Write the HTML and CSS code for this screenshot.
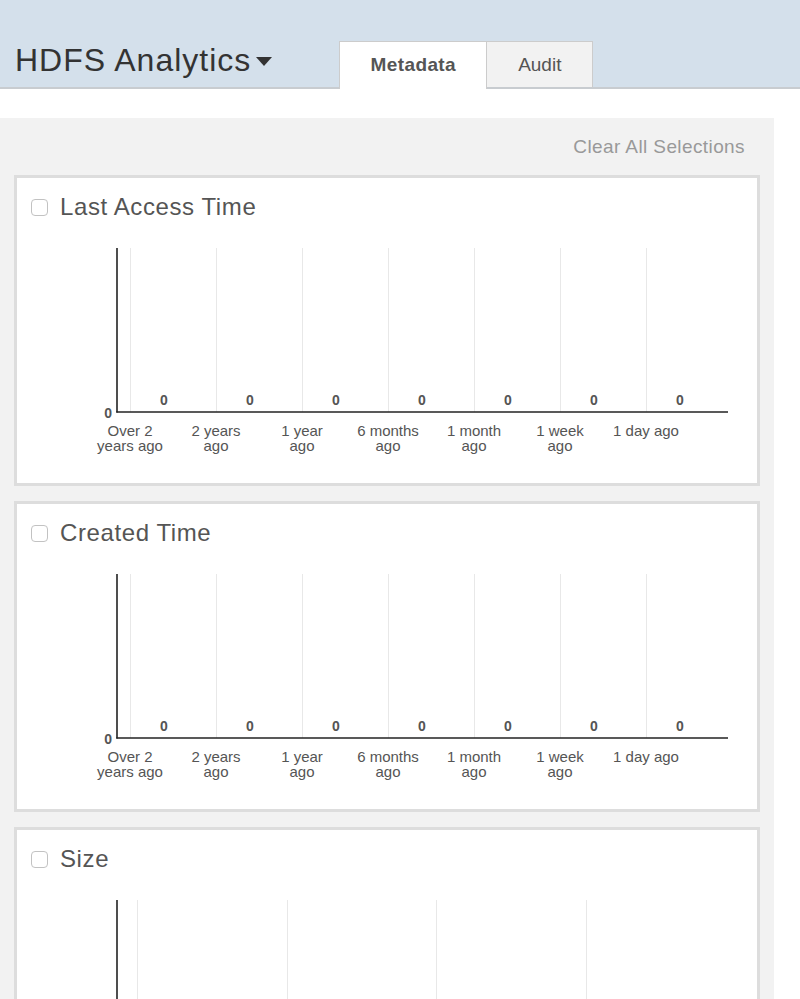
FILE: index.html
```html
<!DOCTYPE html>
<html>
<head>
<meta charset="utf-8">
<title>HDFS Analytics</title>
<link rel="stylesheet" href="styles.css">
</head>
<body>
<header class="topbar">
  <div class="brand">HDFS Analytics<span class="caret"></span></div>
  <nav class="tabs">
    <div class="tab active">Metadata</div>
    <div class="tab">Audit</div>
  </nav>
</header>

<main class="panel">
  <div class="clear-row"><span class="clear-link">Clear All Selections</span></div>

  <section class="card">
    <div class="card-head"><input type="checkbox" class="check"><span class="card-title">Last Access Time</span></div>
    <svg class="chart" width="740" height="261" viewBox="0 0 740 261">
      <g class="grid">
        <line x1="113.5" y1="26" x2="113.5" y2="190"/>
        <line x1="199.5" y1="26" x2="199.5" y2="190"/>
        <line x1="285.5" y1="26" x2="285.5" y2="190"/>
        <line x1="371.5" y1="26" x2="371.5" y2="190"/>
        <line x1="457.5" y1="26" x2="457.5" y2="190"/>
        <line x1="543.5" y1="26" x2="543.5" y2="190"/>
        <line x1="629.5" y1="26" x2="629.5" y2="190"/>
      </g>
      <g class="axis">
        <line x1="100" y1="26" x2="100" y2="190.5"/>
        <line x1="99.3" y1="190" x2="711" y2="190"/>
      </g>
      <text class="ylabel" x="95" y="196">0</text>
      <g class="values">
        <text x="147" y="183">0</text>
        <text x="233" y="183">0</text>
        <text x="319" y="183">0</text>
        <text x="405" y="183">0</text>
        <text x="491" y="183">0</text>
        <text x="577" y="183">0</text>
        <text x="663" y="183">0</text>
      </g>
      <g class="ticks">
        <text x="113" y="213.5">Over 2<tspan x="113" y="229">years ago</tspan></text>
        <text x="199" y="213.5">2 years<tspan x="199" y="229">ago</tspan></text>
        <text x="285" y="213.5">1 year<tspan x="285" y="229">ago</tspan></text>
        <text x="371" y="213.5">6 months<tspan x="371" y="229">ago</tspan></text>
        <text x="457" y="213.5">1 month<tspan x="457" y="229">ago</tspan></text>
        <text x="543" y="213.5">1 week<tspan x="543" y="229">ago</tspan></text>
        <text x="629" y="213.5">1 day ago</text>
      </g>
    </svg>
  </section>

  <section class="card">
    <div class="card-head"><input type="checkbox" class="check"><span class="card-title">Created Time</span></div>
    <svg class="chart" width="740" height="261" viewBox="0 0 740 261">
      <g class="grid">
        <line x1="113.5" y1="26" x2="113.5" y2="190"/>
        <line x1="199.5" y1="26" x2="199.5" y2="190"/>
        <line x1="285.5" y1="26" x2="285.5" y2="190"/>
        <line x1="371.5" y1="26" x2="371.5" y2="190"/>
        <line x1="457.5" y1="26" x2="457.5" y2="190"/>
        <line x1="543.5" y1="26" x2="543.5" y2="190"/>
        <line x1="629.5" y1="26" x2="629.5" y2="190"/>
      </g>
      <g class="axis">
        <line x1="100" y1="26" x2="100" y2="190.5"/>
        <line x1="99.3" y1="190" x2="711" y2="190"/>
      </g>
      <text class="ylabel" x="95" y="196">0</text>
      <g class="values">
        <text x="147" y="183">0</text>
        <text x="233" y="183">0</text>
        <text x="319" y="183">0</text>
        <text x="405" y="183">0</text>
        <text x="491" y="183">0</text>
        <text x="577" y="183">0</text>
        <text x="663" y="183">0</text>
      </g>
      <g class="ticks">
        <text x="113" y="213.5">Over 2<tspan x="113" y="229">years ago</tspan></text>
        <text x="199" y="213.5">2 years<tspan x="199" y="229">ago</tspan></text>
        <text x="285" y="213.5">1 year<tspan x="285" y="229">ago</tspan></text>
        <text x="371" y="213.5">6 months<tspan x="371" y="229">ago</tspan></text>
        <text x="457" y="213.5">1 month<tspan x="457" y="229">ago</tspan></text>
        <text x="543" y="213.5">1 week<tspan x="543" y="229">ago</tspan></text>
        <text x="629" y="213.5">1 day ago</text>
      </g>
    </svg>
  </section>

  <section class="card">
    <div class="card-head"><input type="checkbox" class="check"><span class="card-title">Size</span></div>
    <svg class="chart" width="740" height="261" viewBox="0 0 740 261">
      <g class="grid">
        <line x1="120.5" y1="26" x2="120.5" y2="190"/>
        <line x1="270.5" y1="26" x2="270.5" y2="190"/>
        <line x1="419.5" y1="26" x2="419.5" y2="190"/>
        <line x1="569.5" y1="26" x2="569.5" y2="190"/>
      </g>
      <g class="axis">
        <line x1="100" y1="26" x2="100" y2="190.5"/>
        <line x1="99.3" y1="190" x2="711" y2="190"/>
      </g>
    </svg>
  </section>
</main>
</body>
</html>
```

FILE: styles.css
```css
html, body {
  margin: 0;
  padding: 0;
  background: #ffffff;
  overflow: hidden;
}

body {
  font-family: "Liberation Sans", Arial, Helvetica, sans-serif;
  color: #555555;
}

.topbar {
  display: flex;
  align-items: flex-end;
  height: 87px;
  background: #d4e0eb;
  border-bottom: 2px solid #c8ccd0;
}

.brand {
  display: flex;
  align-items: center;
  margin: 0 0 7px 15px;
  font-size: 32px;
  line-height: 40px;
  letter-spacing: 1px;
  color: #333333;
}

.caret {
  width: 0;
  height: 0;
  margin-left: 5px;
  margin-top: 2px;
  border-left: 8.5px solid transparent;
  border-right: 8.5px solid transparent;
  border-top: 9px solid #333333;
}

.tabs {
  display: flex;
  align-items: flex-end;
  margin-left: 67px;
}

.tab {
  box-sizing: border-box;
  width: 106px;
  height: 46px;
  line-height: 45px;
  text-align: center;
  font-size: 19px;
  color: #555555;
  background: #f2f2f2;
  border: 1px solid #cccccc;
  border-bottom: none;
  border-left: none;
}

.tab.active {
  width: 148px;
  height: 48px;
  margin-bottom: -2px;
  background: #ffffff;
  border-left: 1px solid #cccccc;
  font-weight: bold;
  letter-spacing: 0.4px;
  color: #555555;
}

.panel {
  width: 774px;
  box-sizing: border-box;
  margin-top: 29px;
  padding: 0 14px 20px 14px;
  background: #f2f2f2;
}

.clear-row {
  display: flex;
  justify-content: flex-end;
  padding: 17px 15px 0 0;
  height: 40px;
}

.clear-link {
  font-size: 19px;
  line-height: 24px;
  color: #999999;
  letter-spacing: 0.4px;
}

.card {
  box-sizing: border-box;
  width: 746px;
  height: 311px;
  margin-bottom: 15px;
  background: #ffffff;
  border: 3px solid #dddddd;
}

.card-head {
  display: flex;
  align-items: center;
  height: 30px;
  padding: 14px 0 0 14px;
}

.check {
  appearance: none;
  -webkit-appearance: none;
  box-sizing: border-box;
  width: 17px;
  height: 17px;
  margin: 0 12px 0 0;
  border: 1px solid #c2c2c2;
  border-radius: 4px;
  background: #ffffff;
}

.card-title {
  font-size: 24px;
  line-height: 30px;
  letter-spacing: 0.6px;
  color: #555555;
}

.chart {
  display: block;
}

.grid line {
  stroke: #e8e8e8;
  stroke-width: 1;
}

.axis line {
  stroke: #222222;
  stroke-width: 1.6;
}

.ylabel {
  font-family: "Liberation Sans", Arial, sans-serif;
  font-size: 14px;
  font-weight: bold;
  fill: #555555;
  text-anchor: end;
}

.values text {
  font-family: "Liberation Sans", Arial, sans-serif;
  font-size: 14px;
  font-weight: bold;
  fill: #555555;
  text-anchor: middle;
}

.ticks text {
  font-family: "Liberation Sans", Arial, sans-serif;
  font-size: 15px;
  fill: #555555;
  text-anchor: middle;
}
```
